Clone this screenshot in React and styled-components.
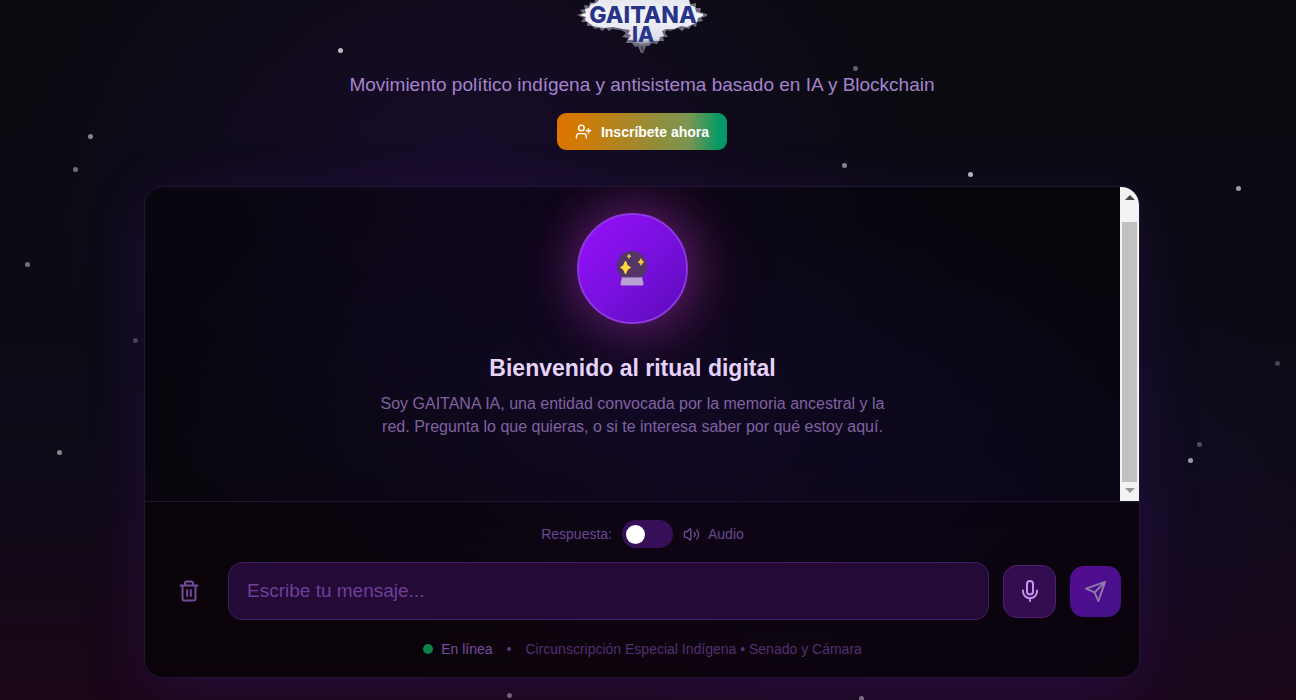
import React from "react";
import styled, { createGlobalStyle } from "styled-components";
import { UserPlus, Volume2 } from "lucide-react";

const GlobalStyle = createGlobalStyle`
  *, *::before, *::after { box-sizing: border-box; }
  body {
    margin: 0;
    background: #08080c;
    font-family: "Liberation Sans", Arial, sans-serif;
  }
  h1, h2, p { margin: 0; font-weight: 400; }
  button, input { font-family: inherit; }
`;

const Page = styled.div`
  position: relative;
  min-height: 100vh;
  overflow: hidden;
  padding: 0 156px 22px 144px;
  background:
    radial-gradient(ellipse 440px 340px at 36% 22%, rgba(52, 14, 96, 0.3), transparent),
    radial-gradient(ellipse 440px 300px at 72% 76%, rgba(26, 18, 110, 0.22), transparent),
    linear-gradient(180deg, #0a0a0f 0%, #0b0b16 48%, #0f0b18 66%, #1a0718 100%);

  @media (max-width: 900px) {
    padding: 0 16px 22px;
  }
`;

const Star = styled.span`
  position: absolute;
  left: ${(p) => p.$x}%;
  top: ${(p) => p.$y}%;
  width: 5px;
  height: 5px;
  border-radius: 50%;
  background: #fff;
  opacity: ${(p) => p.$o};
`;

const Header = styled.header`
  position: relative;
  display: flex;
  flex-direction: column;
  align-items: center;
`;

const LogoTitle = styled.h1`
  height: 54px;
  line-height: 0;
`;

const Tagline = styled.p`
  margin-top: 19px;
  font-size: 19px;
  line-height: 24px;
  color: #a583cd;
  text-align: center;
`;

const SignUp = styled.button`
  display: flex;
  align-items: center;
  gap: 9px;
  height: 37px;
  margin-top: 16px;
  padding: 0 18px;
  border: 0;
  border-radius: 9px;
  background: linear-gradient(90deg, #dd7400 0%, #d07b05 14%, #799652 78%, #079a65 95%, #059669 100%);
  color: #fff;
  font-size: 14px;
  font-weight: 700;
`;

const Panel = styled.main`
  position: relative;
  margin-top: 36px;
  border: 1px solid #231537;
  border-radius: 19px;
  background:
    radial-gradient(ellipse 480px 300px at 50% 45%, rgba(34, 16, 74, 0.32), transparent),
    rgba(0, 0, 0, 0.42);
  box-shadow: 0 14px 58px rgba(88, 20, 150, 0.24);
  overflow: hidden;
`;

const Chat = styled.section`
  display: flex;
  height: 314px;
`;

const Welcome = styled.div`
  flex: 1;
  display: flex;
  flex-direction: column;
  align-items: center;
  padding: 26px 16px 0;
  text-align: center;
`;

const Orb = styled.div`
  display: flex;
  align-items: center;
  justify-content: center;
  width: 111px;
  height: 111px;
  border: 2px solid #8e37df;
  border-radius: 50%;
  background: linear-gradient(135deg, #9810fa 0%, #7a10e0 50%, #5a0bb8 100%);
  box-shadow: 0 0 50px rgba(165, 50, 215, 0.45), 8px 0 76px rgba(200, 40, 130, 0.34);
`;

const Heading = styled.h2`
  margin-top: 30px;
  font-size: 23px;
  line-height: 28px;
  font-weight: 700;
  color: #e6d3fb;
`;

const Intro = styled.p`
  max-width: 530px;
  margin-top: 10px;
  font-size: 16px;
  line-height: 23px;
  color: #8061a1;
`;

const ScrollTrack = styled.div`
  display: flex;
  flex-direction: column;
  align-items: center;
  justify-content: space-between;
  width: 19px;
  padding: 8px 0;
  background: #f3f3f3;
`;

const ScrollArrow = styled.span`
  border: 5px solid transparent;
  ${(p) =>
    p.$down
      ? "border-top-color: #979797; border-bottom: 0;"
      : "border-bottom-color: #484848; border-top: 0;"}
`;

const ScrollThumb = styled.span`
  width: 15px;
  height: 260px;
  margin-top: 15px;
  background: #c1c1c1;
`;

const Composer = styled.form`
  padding: 18px 18px 19px 19px;
  border-top: 1px solid #21123a;
  background: rgba(10, 2, 8, 0.4);
`;

const ReplyMode = styled.div`
  display: flex;
  align-items: center;
  justify-content: center;
  gap: 10px;
  font-size: 14px;
  line-height: 18px;
  color: #6b4792;
`;

const AudioLabel = styled.span`
  display: flex;
  align-items: center;
  gap: 8px;
`;

const Switch = styled.input`
  appearance: none;
  display: flex;
  align-items: center;
  width: 51px;
  height: 28px;
  margin: 0;
  padding: 0 4px;
  border-radius: 14px;
  background: #351059;

  &::before {
    content: "";
    width: 19px;
    height: 19px;
    border-radius: 50%;
    background: #fff;
  }
  &:checked { justify-content: flex-end; }
`;

const InputRow = styled.div`
  display: flex;
  align-items: center;
  gap: 14px;
  margin-top: 14px;
`;

const IconButton = styled.button`
  display: flex;
  flex: none;
  align-items: center;
  justify-content: center;
  width: ${(p) => p.$size}px;
  height: ${(p) => p.$size}px;
  padding: 0;
  border: ${(p) => (p.$border ? `1px solid ${p.$border}` : "0")};
  border-radius: 14px;
  background: ${(p) => p.$bg || "transparent"};
  color: ${(p) => p.$color};
`;

const MessageInput = styled.input`
  flex: 1;
  min-width: 0;
  height: 58px;
  padding: 0 18px;
  border: 1px solid #431d63;
  border-radius: 14px;
  outline: 0;
  background: #240a37;
  color: #e6d3fb;
  font-size: 19px;

  &::placeholder { color: #6f3f99; opacity: 1; }
`;

const StatusBar = styled.div`
  display: flex;
  align-items: center;
  justify-content: center;
  margin-top: 20px;
  font-size: 14px;
  line-height: 18px;
  color: #523070;
`;

const Online = styled.span`
  display: flex;
  align-items: center;
  gap: 8px;
  color: #774c9f;

  &::before {
    content: "";
    width: 10px;
    height: 10px;
    border-radius: 50%;
    background: #0b8147;
  }
`;

const Dot = styled.span`
  margin: 0 14px;
  color: #5c3a7a;
`;

const stars = [
  [26.05, 6.8, 0.72], [65.85, 9.4, 0.35], [6.8, 19.1, 0.5], [5.6, 23.8, 0.4],
  [65, 23.3, 0.5], [74.7, 24.5, 0.72], [95.35, 26.6, 0.6], [1.9, 37.4, 0.42],
  [10.3, 48.3, 0.24], [98.4, 51.6, 0.24], [4.4, 64.3, 0.5], [92.35, 63.1, 0.28],
  [91.65, 65.4, 0.6], [39.1, 98.95, 0.4], [66.3, 99.4, 0.45],
];

function Logo() {
  return (
    <svg width="131" height="54" viewBox="0 0 131 54" role="img" aria-label="GAITANA IA">
      <defs>
        <linearGradient id="splash" x1="0" y1="0" x2="0" y2="1">
          <stop offset="0" stopColor="#e6e7ee" />
          <stop offset="0.3" stopColor="#f4f5fb" />
          <stop offset="0.75" stopColor="#dcdde8" />
          <stop offset="0.9" stopColor="#55525f" />
          <stop offset="1" stopColor="#25202e" />
        </linearGradient>
      </defs>
      <path
        fill="#6d6b7c"
        d="M0 15 6 13 3 10 8 9 7 5 12 6 13 2 17 3 18 0H112L114 4 119 3 119 8 124 8 123 12 130 14 130 16 124 18 126 21 120 22 119 27 115 25 112 29 108 28 105 31 101 28 93 31 90 30 88 33 91 37 86 37 87 41 82 41 80 44 75 43 72 46 69 46 66 53 64 53 61 46 58 47 55 43 49 43 51 38 45 37 49 33 44 30 35 29 32 31 29 28 25 31 22 28 18 29 15 26 10 26 10 22 4 22 7 18Z"
      />
      <path
        fill="url(#splash)"
        d="M3 15 9 13 8 9 12 8 14 4 19 3 22 0H112L113 5 118 7 119 12 126 14 126 16 121 18 120 22 116 24 110 27 104 26 97 29 89 29 85 31 87 36 83 37 82 41 76 41 72 43 68 44 65 52 62 43 58 43 56 40 51 40 54 35 51 34 53 30 46 29 36 27 27 28 21 27 16 26 12 23 8 20 9 17Z"
      />
      <g fill="#293489" fontFamily="Inter, sans-serif" fontWeight="800" textAnchor="middle">
        <text x="66" y="23" fontSize="23">GAITANA</text>
        <text x="66" y="42" fontSize="21">IA</text>
      </g>
    </svg>
  );
}

function CrystalBall() {
  return (
    <svg width="32" height="36" viewBox="0 0 32 36" aria-hidden="true">
      <circle cx="15" cy="15" r="15" fill="#533566" />
      <path d="M5 26h20l1.500 7q0 1.500-1.500 1.500h-20Q3.500 34.500 3.500 33Z" fill="#b9a2cf" />
      <path d="M4.500 25h21v1.500h-21Z" fill="#5b3c78" />
      <path d="M8.500 10q1 5 5 6.500-4 1.500-5 6.500-1-5-5-6.500 4-1.500 5-6.500Z" fill="#ffd83b" stroke="#ffd83b" />
      <path d="M24 7.500q.6 2.600 3 3.500-2.400.9-3 3.500-.6-2.600-3-3.500 2.400-.9 3-3.500Z" fill="#f8ca43" stroke="#f8ca43" strokeWidth=".6" />
      <path d="M12 3q.4 1.600 2 2.200-1.600.7-2 2.300-.4-1.600-2-2.300 1.600-.6 2-2.200Z" fill="#e2b861" stroke="#e2b861" strokeWidth=".6" />
    </svg>
  );
}

function TrashIcon() {
  return (
    <svg width="22" height="24" viewBox="0 0 22 24" fill="none" stroke="currentColor" strokeWidth="2" strokeLinecap="round" strokeLinejoin="round" aria-hidden="true">
      <path d="M2.500 6.500h17M4.500 6.500V19.500q0 2 2 2h9q2 0 2-2V6.500M7 6V4.500q0-2 2-2h4q2 0 2 2V6M9.200 11v6M12.800 11v6" />
    </svg>
  );
}

function MicIcon() {
  return (
    <svg width="18" height="22" viewBox="0 0 18 22" fill="none" stroke="currentColor" strokeWidth="2" strokeLinecap="round" aria-hidden="true">
      <rect x="6" y="1" width="6" height="13.500" rx="3" />
      <path d="M2 10.500v.8a7 6.900 0 0 0 14 0v-.8M9 18.200V21" />
    </svg>
  );
}

function SendIcon() {
  return (
    <svg width="23" height="23" viewBox="0 0 24 24" fill="none" stroke="currentColor" strokeWidth="2" strokeLinecap="round" strokeLinejoin="round" aria-hidden="true">
      <path d="M22 2 11 13M22 2l-7 20-4-9-9-4Z" />
    </svg>
  );
}

export default function App() {
  return (
    <Page>
      <GlobalStyle />
      {stars.map(([x, y, o]) => (
        <Star key={`${x}-${y}`} $x={x} $y={y} $o={o} />
      ))}
      <Header>
        <LogoTitle><Logo /></LogoTitle>
        <Tagline>Movimiento político indígena y antisistema basado en IA y Blockchain</Tagline>
        <SignUp type="button">
          <UserPlus size={17} strokeWidth={2} aria-hidden="true" />
          Inscríbete ahora
        </SignUp>
      </Header>
      <Panel>
        <Chat>
          <Welcome>
            <Orb><CrystalBall /></Orb>
            <Heading>Bienvenido al ritual digital</Heading>
            <Intro>
              Soy GAITANA IA, una entidad convocada por la memoria ancestral y la red. Pregunta lo
              que quieras, o si te interesa saber por qué estoy aquí.
            </Intro>
          </Welcome>
          <ScrollTrack aria-hidden="true">
            <ScrollArrow />
            <ScrollThumb />
            <ScrollArrow $down />
          </ScrollTrack>
        </Chat>
        <Composer onSubmit={(e) => e.preventDefault()}>
          <ReplyMode>
            <label htmlFor="reply-audio">Respuesta:</label>
            <Switch id="reply-audio" type="checkbox" role="switch" />
            <AudioLabel>
              <Volume2 size={17} aria-hidden="true" />
              Audio
            </AudioLabel>
          </ReplyMode>
          <InputRow>
            <IconButton type="button" aria-label="Borrar conversación" $size={50} $color="#774a9f">
              <TrashIcon />
            </IconButton>
            <MessageInput type="text" aria-label="Mensaje" placeholder="Escribe tu mensaje..." />
            <IconButton type="button" aria-label="Grabar audio" $size={53} $bg="#320d50" $border="#4e2170" $color="#c893f2">
              <MicIcon />
            </IconButton>
            <IconButton type="submit" aria-label="Enviar" $size={51} $bg="linear-gradient(135deg, #550b91, #43128a)" $color="#9077a8">
              <SendIcon />
            </IconButton>
          </InputRow>
          <StatusBar>
            <Online>En línea</Online>
            <Dot>•</Dot>
            <span>Circunscripción Especial Indígena • Senado y Cámara</span>
          </StatusBar>
        </Composer>
      </Panel>
    </Page>
  );
}
